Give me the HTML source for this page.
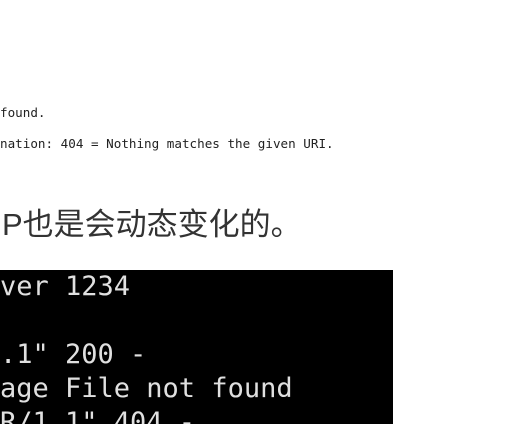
<!DOCTYPE html>
<html><head><meta charset="utf-8"><style>
html,body{margin:0;padding:0;width:522px;height:424px;overflow:hidden;background:#fff;position:relative}
.s{position:absolute;left:0;font-family:"DejaVu Sans Mono","Liberation Mono",monospace;font-size:12.6px;color:#222;white-space:pre;line-height:14px;letter-spacing:0}
.cn{position:absolute;left:2px;top:203px;font-family:"Liberation Sans","Noto Sans CJK SC",sans-serif;font-size:31px;color:#333;line-height:44px;white-space:pre}
.term{position:absolute;left:0;top:270px;width:393px;height:154px;background:#000;overflow:hidden}
.term div{position:absolute;left:0;font-family:"DejaVu Sans Mono","Liberation Mono",monospace;font-size:27px;color:#e0e0e0;white-space:pre;line-height:34px}
</style></head><body>
<div class="s" style="top:106px">found.</div>
<div class="s" style="top:137px">nation: 404 = Nothing matches the given URI.</div>
<div class="cn">P也是会动态变化的。</div>
<div class="term">
<div style="top:0px">ver 1234</div>
<div style="top:68px">.1" 200 -</div>
<div style="top:102px">age File not found</div>
<div style="top:136px">R/1.1" 404 -</div>
</div>
</body></html>
